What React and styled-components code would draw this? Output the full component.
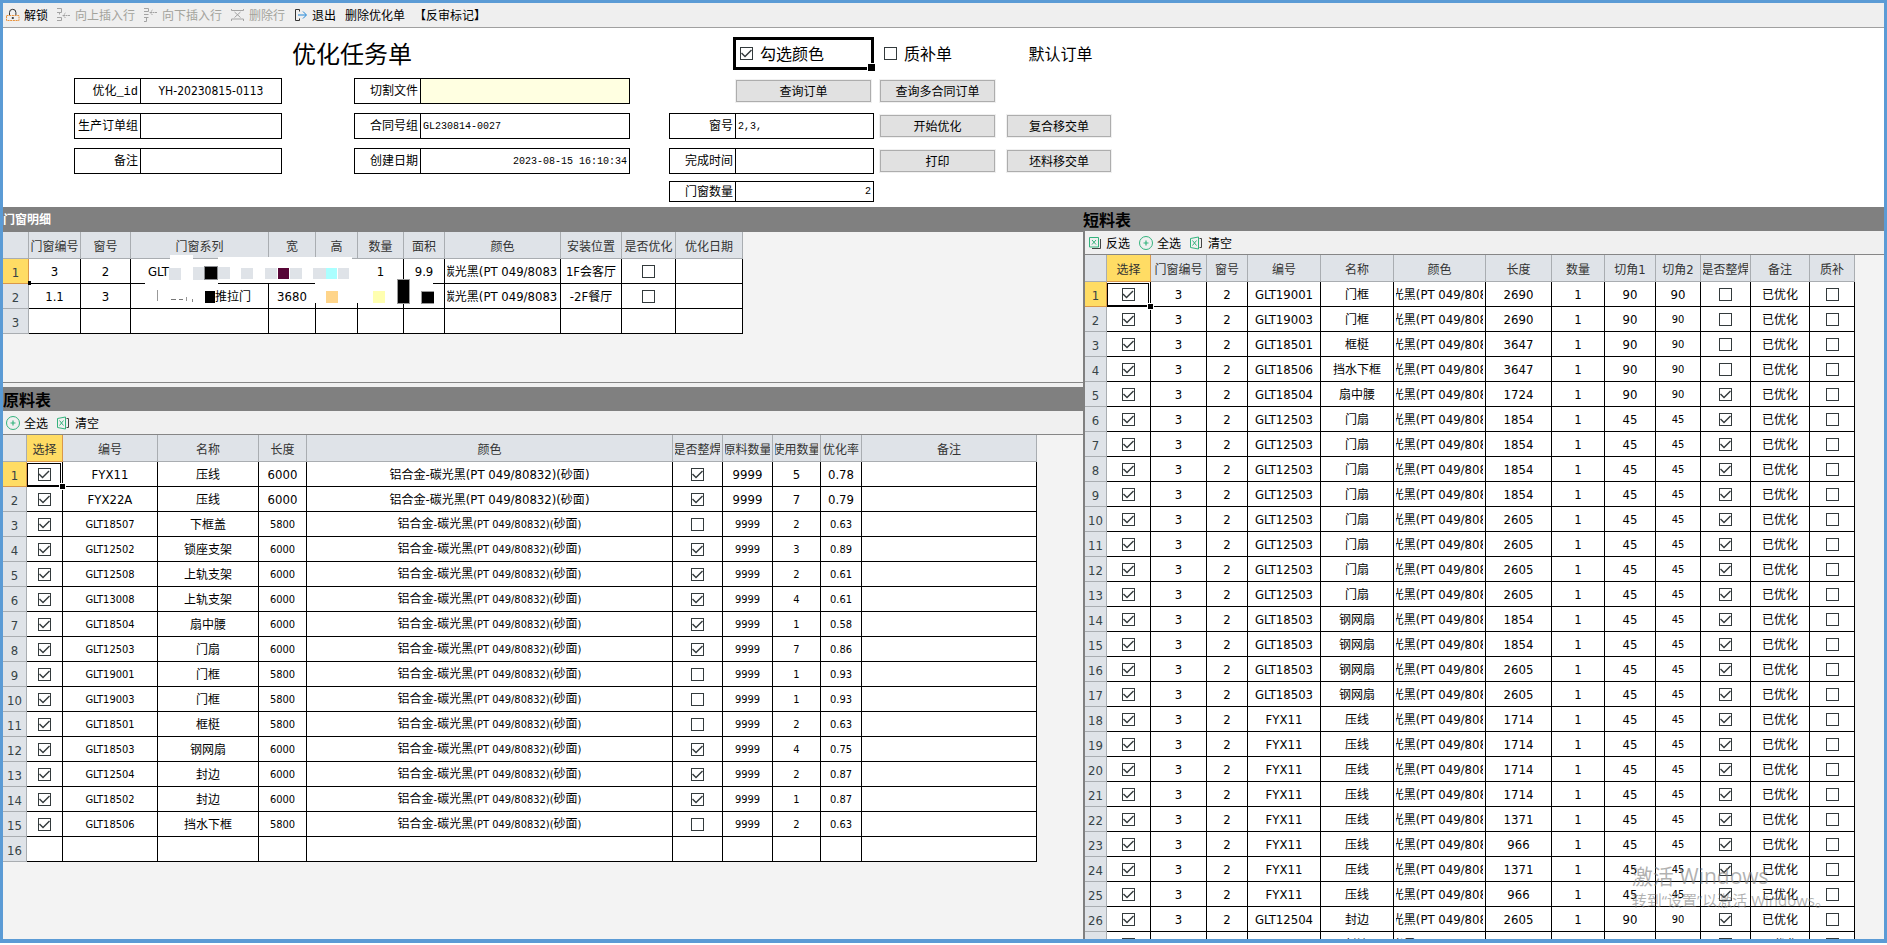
import React from "react";
import styled, { createGlobalStyle, css } from "styled-components";

const GlobalStyle = createGlobalStyle`
  * { box-sizing: border-box; }
  body { margin: 0; background: #fff; }
  body, button, input { font-family: "Noto Sans CJK SC", sans-serif; font-size: 12px; color: #000; }
`;

const Window = styled.div`
  position: relative;
  display: flex;
  flex-direction: column;
  height: calc(100vh - 2px);
  border: 3px solid #5b9bd5;
  border-bottom-width: 4px;
  background: #f3f3f3;
  overflow: hidden;
`;

/* ---------- toolbars ---------- */

const MainToolbar = styled.div`
  display: flex;
  align-items: center;
  flex: none;
  height: 25px;
  padding-left: 3px;
  gap: 9px;
  background: #efefef;
  border-bottom: 1px solid #a0a0a0;
`;

const SubToolbar = styled.div`
  display: flex;
  align-items: center;
  flex: none;
  height: 24px;
  padding-left: 3px;
  gap: 9px;
  background: #f0f0f0;
  border-bottom: 1px solid #868686;
`;

const ToolButton = styled.button`
  display: inline-flex;
  align-items: center;
  gap: 4px;
  padding: 0;
  border: 0;
  background: none;
  line-height: 16px;
  white-space: nowrap;
  &:disabled { color: #a3a39c; }
  svg { display: block; width: 14px; height: 14px; }
`;

const LockIcon = () => (
  <svg viewBox="0 0 14 14" fill="none" strokeWidth="1">
    <path d="M3.5 7V4.5a3.2 3.2 0 0 1 6.4 0V7" stroke="#333" />
    <path d="M.5 7.5h12.5v5H.5z" stroke="#e8913a" strokeDasharray="2 .7" />
    <path d="M6.2 9.5h1.2v1H6.2z" stroke="#333" />
  </svg>
);
const InsertIcon = ({ down }) => (
  <svg viewBox="0 0 14 14" fill="none" stroke="#a3a3a3">
    <path d={down ? "M0 .5h4.5v3H0M0 6.5h4.5M0 9.5h4.5M2.5 9.5v4H0" : "M0 .5h4.5v4H0M2.5 4.5v2M0 9.5h4.5v3H0"} />
    <path d={down ? "M6 4.5h7M8.5 2 6 4.5 8.5 7" : "M6 7.5h7M8.5 5 6 7.5 8.5 10"} strokeDasharray="2 .5" />
  </svg>
);
const DeleteRowIcon = () => (
  <svg viewBox="0 0 14 14" fill="none" stroke="#a3a3a3">
    <path d="M.5 1v1.500h12V1M.5 13v-2h12v2M3.500 4l6 5.500M9.500 4l-6 5.500" />
  </svg>
);
const ExitIcon = () => (
  <svg viewBox="0 0 14 14" fill="none">
    <path d="M5.500 1.500h-4v11h4M5.500 1.500v2M5.500 12.500v-2" stroke="#333" />
    <path d="M4 7h8M9 3.500 12.500 7 9 10.500" stroke="#1f86d8" />
  </svg>
);
const PlusCircleIcon = () => (
  <svg viewBox="0 0 14 14" fill="none" stroke="#34b37d">
    <circle cx="7" cy="7" r="6.500" />
    <path d="M4.500 7h5M7 4.500v5" strokeWidth="1.200" />
  </svg>
);
const SheetIcon = () => (
  <svg viewBox="0 0 14 14" fill="none" stroke="#34b37d">
    <path d="M.5 2.500 8.500 1v12l-8-1.500zM2.500 4.500l4 5M6.500 4.500l-4 5" />
    <path d="M9.500 2.500h2v9h-2" stroke="#444" />
  </svg>
);
const InvertIcon = () => (
  <svg viewBox="0 0 14 14" fill="none" stroke="#34b37d">
    <path d="M1.500 1.500h9v9.500h-9zM4 4l4 4.500M8 4 4 8.500" />
    <path d="M12.500 3v9.500H4" stroke="#444" />
  </svg>
);

/* ---------- check box ---------- */

const CheckBox = styled.input.attrs({ type: "checkbox" })`
  appearance: none;
  flex: none;
  width: 13px;
  height: 13px;
  margin: 0;
  border: 1px solid #333a3c;
  background: #fff;
  &:checked::after {
    content: "";
    display: block;
    width: 11px;
    height: 11px;
    background: #333a3c;
    clip-path: polygon(1px 5px, 4px 8px, 10px 2px, 11px 3px, 4px 10px, 0 6px);
  }
`;

/* ---------- order form ---------- */

const Form = styled.form`
  display: flex;
  flex: none;
  height: 179px;
  padding-left: 71px;
  background: #fff;
`;

const FormGroup = styled.div`
  width: ${(p) => p.$width}px;
  margin-right: ${(p) => p.$gap}px;
  flex: none;
`;

const FormHead = styled.div`
  display: flex;
  align-items: center;
  justify-content: ${(p) => p.$justify || "flex-start"};
  height: 50px;
  font-size: 16px;
  line-height: 24px;
`;

const FormTitle = styled.h1`
  margin: 0;
  font-size: 24px;
  font-weight: 400;
  line-height: 36px;
`;

const FormRows = styled.div`
  display: flex;
  flex-direction: column;
  align-items: flex-end;
  gap: 9px;
`;

const FormRow = styled.div`
  display: flex;
  justify-content: space-between;
  align-items: center;
  width: 100%;
  height: 26px;
`;

const FieldBox = styled.label`
  display: flex;
  width: ${(p) => p.$width}px;
  height: ${(p) => (p.$short ? 21 : 26)}px;
  margin-top: ${(p) => (p.$short ? -2 : 0)}px;
  border: 1px solid #000;
  background: #fff;
`;

const FieldLabel = styled.span`
  display: flex;
  align-items: center;
  justify-content: flex-end;
  flex: none;
  width: 65px;
  padding: 2px 2px 0 0;
  line-height: 16px;
  font-family: "Liberation Mono", "Noto Sans CJK SC", monospace;
`;

const FieldInput = styled.input`
  flex: 1;
  min-width: 0;
  padding: 0 2px;
  border: 0;
  border-left: 1px solid #000;
  outline: 0;
  background: ${(p) => (p.$highlight ? "#ffffe1" : "#fff")};
  text-align: ${(p) => p.$align || "left"};
  font-family: "Liberation Mono", monospace;
  font-size: 10px;
  ${(p) => p.$sans && css`
    font-family: "DejaVu Sans Condensed", "Noto Sans", sans-serif;
    font-size: 12px;
  `}
`;

const Field = ({ label, value = "", width, short, ...rest }) => (
  <FieldBox $width={width} $short={short}>
    <FieldLabel>{label}</FieldLabel>
    <FieldInput defaultValue={value} {...rest} />
  </FieldBox>
);

const PushButton = styled.button`
  width: ${(p) => p.$width}px;
  height: 22px;
  margin: 2px 3px 2px 0;
  padding: 0;
  border: 1px solid #adadad;
  background: #e1e1e1;
  box-shadow: 0 0 0 1px #f0f0f0;
  line-height: 16px;
`;

const ToggleLabel = styled.label`
  position: relative;
  display: flex;
  align-items: center;
  gap: 7px;
  padding-left: 4px;
  ${(p) => p.$active && css`
    width: 141px;
    height: 33px;
    border: 3px solid #000;
    &::after {
      content: "";
      position: absolute;
      right: -5px;
      bottom: -5px;
      width: 7px;
      height: 7px;
      border: 1px solid #fff;
      background: #000;
    }
  `}
`;

/* ---------- panels ---------- */

const Panels = styled.main`
  flex: 1;
  min-height: 0;
  display: grid;
  grid-template-columns: minmax(0, 1080fr) minmax(0, 801fr);
`;

const PanelColumn = styled.div`
  display: flex;
  flex-direction: column;
  min-height: 0;
`;

const Panel = styled.section`
  display: flex;
  flex-direction: column;
  flex: ${(p) => (p.$height ? `0 0 ${p.$height}px` : "1 1 0")};
  min-height: 0;
  background: #f3f3f3;
  overflow: hidden;
`;

const PanelTitle = styled.h2`
  flex: none;
  margin: 0;
  height: ${(p) => (p.$minor ? 25 : 24)}px;
  background: #808080;
  color: ${(p) => (p.$minor ? "#fff" : "#000")};
  font-size: ${(p) => (p.$minor ? 12 : 16)}px;
  line-height: 24px;
  font-weight: 700;
`;

const PanelBody = styled.div`
  position: relative;
  display: flex;
  flex-direction: column;
  flex: 1;
  min-height: 0;
  overflow: hidden;
  border-left: ${(p) => (p.$edge ? "2px solid #808080" : "0")};
`;

const Splitter = styled.div`
  flex: none;
  height: 5px;
  border-top: 1px solid #868686;
  background: #f0f0f0;
`;

/* ---------- data grids ---------- */

const Grid = styled.table`
  flex: none;
  table-layout: fixed;
  width: ${(p) => p.$width}px;
  border-collapse: separate;
  border-spacing: 0;
`;

const marked = css`
  background: #ffdc64;
  border-color: #d9974a;
`;

const HeadCell = styled.th`
  height: 27px;
  padding: 2px 0 0;
  border: 0 solid #a9adb1;
  border-width: 0 1px 1px 0;
  background: #dfe3e8;
  color: #333;
  font-weight: 400;
  ${(p) => p.$marked && marked}
`;

const RowHead = styled.th`
  height: 25px;
  padding: 0;
  border: 0 solid #a9adb1;
  border-width: 0 1px 1px 0;
  background: #dfe3e8;
  color: #374347;
  font-weight: 400;
  ${(p) => p.$marked && marked}
`;

const Cell = styled.td`
  position: relative;
  height: 25px;
  padding: 0;
  border: 0 solid #000;
  border-width: 0 1px 1px 0;
  background: #fff;
`;

const CellContent = styled.div`
  display: flex;
  align-items: center;
  justify-content: ${(p) => p.$align || "center"};
  height: ${(p) => (p.$selected ? 23 : 24)}px;
  margin: 0 2px;
  padding: 0 ${(p) => (p.$align ? 15 : 0)}px;
  overflow: hidden;
  white-space: pre;
  line-height: 18px;
  ${(p) => p.$selected && css`
    margin: 0 1px 0 0;
    border: 1px solid #000;
  `}
`;

const FillHandle = styled.span`
  position: absolute;
  z-index: 1;
  right: -3px;
  bottom: -3px;
  width: 5px;
  height: 5px;
  background: #000;
  outline: 1px solid #fff;
`;

const DotHolder = styled.span`
  position: absolute;
  left: 0;
  bottom: 0;
`;

const CornerDot = styled(FillHandle)`
  right: -2px;
  bottom: -2px;
  width: 3px;
  height: 4px;
  outline: 0;
`;

const Latin = styled.span`
  font-family: "DejaVu Sans Condensed", "Noto Sans", sans-serif;
  font-size: ${(p) => (p.$small ? 11 : 13)}px;
`;

const Mixed = ({ text, small }) => (
  <span>
    {String(text).split(/([\u0020-\u007e]+)/).map((part, i) =>
      i % 2 ? <Latin key={i} $small={small}>{part}</Latin> : part
    )}
  </span>
);

function DataGrid({ columns, rows, rowCount, cornerDot, markedColumn, isSmall = () => false }) {
  const width = columns.reduce((sum, c) => sum + c.width, 0);
  return (
    <Grid $width={width}>
      <colgroup>
        {columns.map((c, i) => <col key={i} style={{ width: c.width }} />)}
      </colgroup>
      <thead>
        <tr>
          {columns.map((c, i) => (
            <HeadCell key={i} scope="col" $marked={i === markedColumn}>
              <CellContent><Mixed text={c.title} /></CellContent>
            </HeadCell>
          ))}
        </tr>
      </thead>
      <tbody>
        {Array.from({ length: rowCount }, (_, r) => (
          <tr key={r}>
            <RowHead scope="row" $marked={r === 0}><Mixed text={r + 1} /></RowHead>
            {columns.slice(1).map((c, i) => {
              const value = rows[r] ? rows[r][i] : "";
              const selected = r === 0 && i + 1 === markedColumn;
              const align = value && value.align;
              return (
                <Cell key={i}>
                  <CellContent $selected={selected} $align={align}>
                    {typeof value === "boolean" ? (
                      <CheckBox defaultChecked={value} aria-label={`${c.title} ${r + 1}`} />
                    ) : (
                      <Mixed text={align ? value.text : value} small={isSmall(r, i)} />
                    )}
                  </CellContent>
                  {selected && <FillHandle />}
                  {cornerDot && r === 0 && i === 0 && <DotHolder><CornerDot /></DotHolder>}
                </Cell>
              );
            })}
          </tr>
        ))}
      </tbody>
    </Grid>
  );
}

const cols = (...list) => list.map(([title, width]) => ({ title, width }));
const COLOR = "铝合金-碳光黑(PT 049/80832)(砂面)";

const windowColumns = cols(
  ["", 26], ["门窗编号", 52], ["窗号", 50], ["门窗系列", 138], ["宽", 47], ["高", 42], ["数量", 46],
  ["面积", 41], ["颜色", 116], ["安装位置", 61], ["是否优化", 54], ["优化日期", 67]
);
const windowRows = [
  ["3", "2", { text: "GLT", align: "flex-start" }, "", "", "1", "9.9", COLOR, "1F会客厅", false, ""],
  ["1.1", "3", { text: "推拉门", align: "flex-end" }, "3680", "", "", "", COLOR, "-2F餐厅", false, ""],
];

const materialColumns = cols(
  ["", 24], ["选择", 36], ["编号", 95], ["名称", 101], ["长度", 48], ["颜色", 366], ["是否整焊", 50],
  ["原料数量", 50], ["使用数量", 48], ["优化率", 41], ["备注", 175]
);
const materialRows = [
  ["FYX11", "压线", 6000, true, 5, "0.78"],
  ["FYX22A", "压线", 6000, true, 7, "0.79"],
  ["GLT18507", "下框盖", 5800, false, 2, "0.63"],
  ["GLT12502", "锁座支架", 6000, true, 3, "0.89"],
  ["GLT12508", "上轨支架", 6000, true, 2, "0.61"],
  ["GLT13008", "上轨支架", 6000, true, 4, "0.61"],
  ["GLT18504", "扇中腰", 6000, true, 1, "0.58"],
  ["GLT12503", "门扇", 6000, true, 7, "0.86"],
  ["GLT19001", "门框", 5800, false, 1, "0.93"],
  ["GLT19003", "门框", 5800, false, 1, "0.93"],
  ["GLT18501", "框梃", 5800, false, 2, "0.63"],
  ["GLT18503", "钢网扇", 6000, true, 4, "0.75"],
  ["GLT12504", "封边", 6000, true, 2, "0.87"],
  ["GLT18502", "封边", 6000, true, 1, "0.87"],
  ["GLT18506", "挡水下框", 5800, false, 2, "0.63"],
].map(([code, name, length, welded, used, rate]) => [true, code, name, length, COLOR, welded, 9999, used, rate, ""]);

const shortColumns = cols(
  ["", 22], ["选择", 44], ["门窗编号", 56], ["窗号", 41], ["编号", 73], ["名称", 73], ["颜色", 92], ["长度", 66],
  ["数量", 53], ["切角1", 51], ["切角2", 45], ["是否整焊", 50], ["备注", 59], ["质补", 45]
);
const shortRows = [
  ["GLT19001", "门框", 2690, 90, false],
  ["GLT19003", "门框", 2690, 90, false],
  ["GLT18501", "框梃", 3647, 90, false],
  ["GLT18506", "挡水下框", 3647, 90, false],
  ["GLT18504", "扇中腰", 1724, 90, true],
  ["GLT12503", "门扇", 1854, 45, true],
  ["GLT12503", "门扇", 1854, 45, true],
  ["GLT12503", "门扇", 1854, 45, true],
  ["GLT12503", "门扇", 1854, 45, true],
  ["GLT12503", "门扇", 2605, 45, true],
  ["GLT12503", "门扇", 2605, 45, true],
  ["GLT12503", "门扇", 2605, 45, true],
  ["GLT12503", "门扇", 2605, 45, true],
  ["GLT18503", "钢网扇", 1854, 45, true],
  ["GLT18503", "钢网扇", 1854, 45, true],
  ["GLT18503", "钢网扇", 2605, 45, true],
  ["GLT18503", "钢网扇", 2605, 45, true],
  ["FYX11", "压线", 1714, 45, true],
  ["FYX11", "压线", 1714, 45, true],
  ["FYX11", "压线", 1714, 45, true],
  ["FYX11", "压线", 1714, 45, true],
  ["FYX11", "压线", 1371, 45, true],
  ["FYX11", "压线", 966, 45, true],
  ["FYX11", "压线", 1371, 45, true],
  ["FYX11", "压线", 966, 45, true],
  ["GLT12504", "封边", 2605, 90, true],
  ["GLT12504", "封边", 2605, 90, true],
].map(([code, name, length, angle, welded]) =>
  [true, "3", "2", code, name, COLOR, length, 1, angle, angle, welded, "已优化", false]);

/* ---------- redaction blocks over the window grid ---------- */

const Redaction = styled.svg`
  position: absolute;
  left: 137px;
  top: 18px;
  width: 300px;
  height: 60px;
`;

const blocks = [
  ["#fff", 170, 255, 23, 28], ["#fff", 170, 259, 188, 24], ["#fff", 218, 257, 134, 20],
  ["#fff", 145, 282, 73, 4], ["#fff", 315, 282, 118, 4], ["#fff", 145, 286, 60, 17],
  ["#fff", 314, 285, 6, 18], ["#fff", 352, 264, 10, 39],
  ["#dfe3e8", 169, 268, 12, 12], ["#dfe3e8", 193, 267, 12, 13], ["#dfe3e8", 218, 267, 12, 12],
  ["#dfe3e8", 241, 268, 12, 11], ["#dfe3e8", 265, 268, 12, 11], ["#dfe3e8", 290, 268, 12, 11],
  ["#dfe3e8", 313, 268, 13, 11], ["#dfe3e8", 338, 268, 11, 11],
  ["#8a8c90", 204, 266, 14, 14], ["#000", 205, 267, 12, 12], ["#570536", 278, 268, 11, 11],
  ["#aaffff", 326, 268, 11, 11],
  ["#999", 157, 290, 1, 11], ["#777", 171, 299, 5, 1], ["#777", 179, 299, 4, 1],
  ["#999", 186, 297, 1, 4], ["#888", 192, 299, 1, 3],
  ["#000", 205, 291, 10, 12], ["#ffd58a", 326, 291, 12, 12], ["#ffffb0", 373, 291, 12, 12],
  ["#999", 397, 279, 13, 25], ["#000", 398, 280, 11, 23],
  ["#999", 421, 291, 13, 13], ["#000", 422, 292, 12, 11],
];

const Watermark = styled.div`
  position: absolute;
  right: 54px;
  bottom: 29px;
  color: rgba(125, 125, 125, 0.6);
  font-family: "Open Sans", "Noto Sans CJK SC", sans-serif;
  font-size: 15px;
  line-height: 20px;
  white-space: nowrap;
  pointer-events: none;
  strong { display: block; font-size: 21px; line-height: 28px; font-weight: 400; }
`;

export default function App() {
  return (
    <Window>
      <GlobalStyle />
      <MainToolbar>
        <ToolButton><LockIcon />解锁</ToolButton>
        <ToolButton disabled><InsertIcon />向上插入行</ToolButton>
        <ToolButton disabled><InsertIcon down />向下插入行</ToolButton>
        <ToolButton disabled><DeleteRowIcon />删除行</ToolButton>
        <ToolButton><ExitIcon />退出</ToolButton>
        <ToolButton>删除优化单</ToolButton>
        <ToolButton>【反审标记】</ToolButton>
      </MainToolbar>

      <Form>
        <FormGroup $width={556} $gap={39}>
          <FormHead $justify="center"><FormTitle>优化任务单</FormTitle></FormHead>
          <FormRows>
            <FormRow>
              <Field label="优化_id" value="YH-20230815-0113" width={208} $sans $align="center" />
              <Field label="切割文件" width={276} $highlight />
            </FormRow>
            <FormRow>
              <Field label="生产订单组" width={208} />
              <Field label="合同号组" value="GL230814-0027" width={276} />
            </FormRow>
            <FormRow>
              <Field label="备注" width={208} />
              <Field label="创建日期" value="2023-08-15 16:10:34" width={276} $align="right" />
            </FormRow>
          </FormRows>
        </FormGroup>

        <FormGroup $width={205} $gap={6}>
          <FormHead $justify="flex-end">
            <ToggleLabel $active><CheckBox defaultChecked />勾选颜色</ToggleLabel>
          </FormHead>
          <FormRows>
            <PushButton type="button" $width={135}>查询订单</PushButton>
            <Field label="窗号" value="2,3," width={205} />
            <Field label="完成时间" width={205} />
            <Field label="门窗数量" value="2" width={205} short $align="right" />
          </FormRows>
        </FormGroup>

        <FormGroup $width={118} $gap={9}>
          <FormHead><ToggleLabel><CheckBox />质补单</ToggleLabel></FormHead>
          <FormRows>
            <PushButton type="button" $width={115}>查询多合同订单</PushButton>
            <PushButton type="button" $width={115}>开始优化</PushButton>
            <PushButton type="button" $width={115}>打印</PushButton>
          </FormRows>
        </FormGroup>

        <FormGroup $width={107} $gap={0}>
          <FormHead $justify="center">默认订单</FormHead>
          <FormRows>
            <FormRow />
            <PushButton type="button" $width={104}>复合移交单</PushButton>
            <PushButton type="button" $width={104}>坯料移交单</PushButton>
          </FormRows>
        </FormGroup>
      </Form>

      <Panels>
        <PanelColumn>
          <Panel $height={175}>
            <PanelTitle $minor>门窗明细</PanelTitle>
            <PanelBody>
              <DataGrid columns={windowColumns} rows={windowRows} rowCount={3} cornerDot />
              <Redaction viewBox="140 250 300 60" aria-hidden="true">
                {blocks.map(([fill, x, y, w, h], i) => (
                  <rect key={i} fill={fill} x={x} y={y} width={w} height={h} />
                ))}
              </Redaction>
            </PanelBody>
          </Panel>
          <Splitter />
          <Panel>
            <PanelTitle>原料表</PanelTitle>
            <SubToolbar>
              <ToolButton><PlusCircleIcon />全选</ToolButton>
              <ToolButton><SheetIcon />清空</ToolButton>
            </SubToolbar>
            <PanelBody>
              <DataGrid
                columns={materialColumns}
                rows={materialRows}
                rowCount={16}
                markedColumn={1}
                isSmall={(r) => r > 1}
              />
            </PanelBody>
          </Panel>
        </PanelColumn>

        <Panel>
          <PanelTitle>短料表</PanelTitle>
          <PanelBody $edge>
            <SubToolbar>
              <ToolButton><InvertIcon />反选</ToolButton>
              <ToolButton><PlusCircleIcon />全选</ToolButton>
              <ToolButton><SheetIcon />清空</ToolButton>
            </SubToolbar>
            <DataGrid
              columns={shortColumns}
              rows={shortRows}
              rowCount={27}
              markedColumn={1}
              isSmall={(r, i) => i === 9 && r > 0}
            />
          </PanelBody>
        </Panel>
      </Panels>

      <Watermark><strong>激活 Windows</strong>转到“设置”以激活 Windows。</Watermark>
    </Window>
  );
}
